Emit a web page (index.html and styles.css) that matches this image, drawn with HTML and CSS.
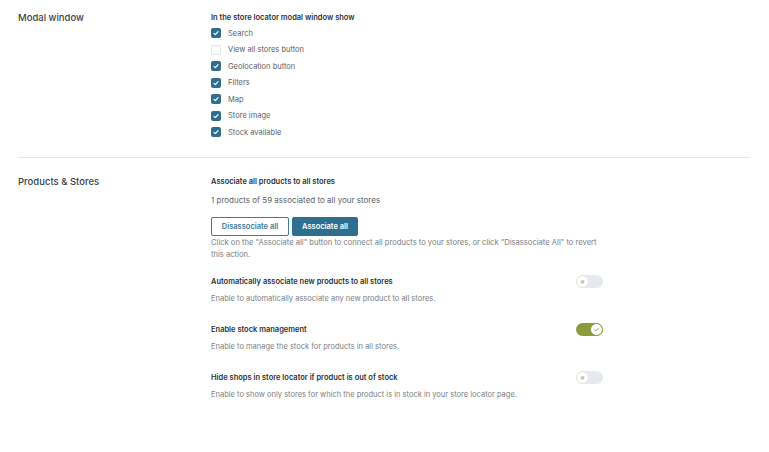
FILE: index.html
```html
<!DOCTYPE html>
<html lang="en">
<head>
    <meta charset="UTF-8">
    <meta name="viewport" content="width=device-width, initial-scale=1.0">
    <title>Store Locator Settings</title>
    <link rel="stylesheet" href="styles.css">
</head>
<body>
    <main class="settings">
        <section class="setting-section first">
            <h2 class="section-title">Modal window</h2>
            <div class="section-body">
                <h3 class="field-title">In the store locator modal window show</h3>
                <ul class="check-list">
                    <li><span class="box checked"></span>Search</li>
                    <li><span class="box"></span>View all stores button</li>
                    <li><span class="box checked"></span>Geolocation button</li>
                    <li><span class="box checked"></span>Filters</li>
                    <li><span class="box checked"></span>Map</li>
                    <li><span class="box checked"></span>Store image</li>
                    <li><span class="box checked"></span>Stock available</li>
                </ul>
            </div>
        </section>

        <section class="setting-section">
            <h2 class="section-title">Products &amp; Stores</h2>
            <div class="section-body">
                <h3 class="field-title">Associate all products to all stores</h3>
                <p class="count">1 products of 59 associated to all your stores</p>
                <div class="buttons">
                    <button type="button" class="btn outline">Disassociate all</button>
                    <button type="button" class="btn primary">Associate all</button>
                </div>
                <p class="help">Click on the "Associate all" button to connect all products to your stores, or click "Disassociate All" to revert this action.</p>

                <div class="toggle-field">
                    <div class="toggle-row">
                        <h3 class="field-title">Automatically associate new products to all stores</h3>
                        <span class="toggle"><span class="knob">&times;</span></span>
                    </div>
                    <p class="desc">Enable to automatically associate any new product to all stores.</p>
                </div>

                <div class="toggle-field">
                    <div class="toggle-row">
                        <h3 class="field-title">Enable stock management</h3>
                        <span class="toggle on">
                            <span class="knob">
                                <svg viewBox="0 0 10 10" width="7" height="7"><path d="M2.2 5.3 L4.2 7.2 L7.8 3" fill="none" stroke="#8b9b3a" stroke-width="1.3" stroke-linecap="round" stroke-linejoin="round"/></svg>
                            </span>
                        </span>
                    </div>
                    <p class="desc">Enable to manage the stock for products in all stores.</p>
                </div>

                <div class="toggle-field">
                    <div class="toggle-row">
                        <h3 class="field-title">Hide shops in store locator if product is out of stock</h3>
                        <span class="toggle"><span class="knob">&times;</span></span>
                    </div>
                    <p class="desc">Enable to show only stores for which the product is in stock in your store locator page.</p>
                </div>
            </div>
        </section>
    </main>
</body>
</html>
```

FILE: styles.css
```css
body {
    font-family: Inter, "Noto Sans", Arial, sans-serif;
    margin: 0;
    padding: 0;
    background-color: #fff;
    color: #50575e;
}
.settings {
    padding: 11px 19px 0 18px;
}
.setting-section {
    display: grid;
    grid-template-columns: 193px 1fr;
    padding: 17px 0 16px;
}
.setting-section.first {
    padding-top: 0;
    border-bottom: 1px solid #e6e7e9;
}
.section-title {
    margin: 0;
    font-size: 9.5px;
    line-height: 13px;
    font-weight: 500;
    color: #3c434a;
}
.section-body {
    width: 392px;
}
.field-title {
    margin: 0;
    font-size: 7.5px;
    line-height: 13px;
    font-weight: 600;
    color: #2c3338;
}
.check-list {
    list-style: none;
    margin: 1px 0 0;
    padding: 0;
}
.check-list li {
    display: flex;
    align-items: center;
    height: 16.5px;
    font-size: 7.5px;
    color: #5c6268;
}
.box {
    width: 10px;
    height: 10px;
    box-sizing: border-box;
    border: 1px solid #e2e4e7;
    border-radius: 2px;
    margin-right: 7px;
    background: #fff;
}
.box.checked {
    border: none;
    background: #2f6e8e url("data:image/svg+xml,%3Csvg xmlns='http://www.w3.org/2000/svg' viewBox='0 0 10 10'%3E%3Cpath d='M3 5.4 L4.4 6.6 L7 3.6' fill='none' stroke='white' stroke-width='1.2' stroke-linecap='round' stroke-linejoin='round'/%3E%3C/svg%3E") center / 10px 10px no-repeat;
}
.count {
    margin: 5.5px 0 0;
    font-size: 8px;
    line-height: 14px;
    color: #5c6268;
}
.buttons {
    display: flex;
    gap: 3px;
    margin-top: 10px;
}
.btn {
    font-family: inherit;
    font-size: 7.5px;
    font-weight: 600;
    height: 19px;
    padding: 0;
    border-radius: 2px;
    white-space: nowrap;
    cursor: pointer;
}
.btn.outline {
    background: #fff;
    border: 1px solid #3b7d9b;
    color: #3b7d9b;
    width: 78px;
}
.btn.primary {
    background: #2e6f8f;
    border: 1px solid #2e6f8f;
    color: #fff;
    width: 66px;
}
.help {
    margin: 1px 0 0;
    font-size: 7.6px;
    line-height: 12px;
    color: #7a7e83;
    width: 392px;
}
.toggle-field {
    margin-top: 13.5px;
}
.toggle-field + .toggle-field {
    margin-top: 17.5px;
}
.toggle-row {
    display: flex;
    justify-content: space-between;
    align-items: center;
    height: 13px;
}
.desc {
    margin: 5.5px 0 0;
    font-size: 7.5px;
    line-height: 12px;
    color: #7a7e83;
}
.toggle {
    position: relative;
    width: 27px;
    height: 13px;
    border-radius: 7px;
    background: #e6e9ed;
}
.knob {
    position: absolute;
    left: 0;
    top: 0;
    width: 13px;
    height: 13px;
    box-sizing: border-box;
    border: 1px solid #dfe2e6;
    border-radius: 50%;
    background: #fff;
    display: flex;
    align-items: center;
    justify-content: center;
    font-size: 8px;
    line-height: 1;
    color: #8c9196;
}
.toggle.on {
    background: #8b9b3a;
}
.toggle.on .knob {
    left: 14px;
    border-color: #8b9b3a;
}
```
